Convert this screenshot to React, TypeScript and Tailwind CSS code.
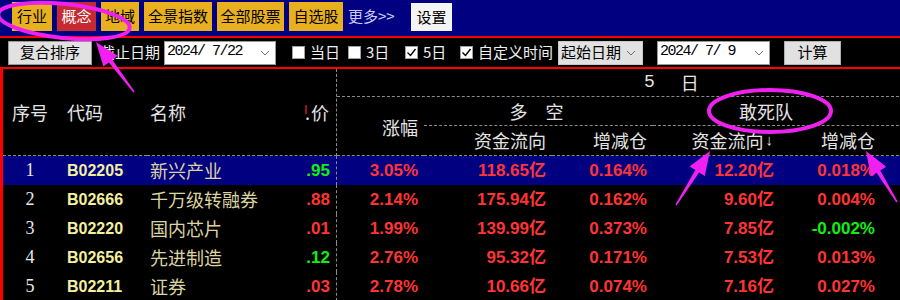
import React from "react";

type Row = {
  no: number;
  code: string;
  name: string;
  price: string;
  priceUp: boolean;
  chg: string;
  flow1: string;
  pos1: string;
  flow2: string;
  pos2: string;
  pos2Up: boolean;
};

const rows: Row[] = [
  { no: 1, code: "B02205", name: "新兴产业", price: ".95", priceUp: false, chg: "3.05%", flow1: "118.65亿", pos1: "0.164%", flow2: "12.20亿", pos2: "0.018%", pos2Up: true },
  { no: 2, code: "B02666", name: "千万级转融券", price: ".88", priceUp: true, chg: "2.14%", flow1: "175.94亿", pos1: "0.162%", flow2: "9.60亿", pos2: "0.004%", pos2Up: true },
  { no: 3, code: "B02220", name: "国内芯片", price: ".01", priceUp: true, chg: "1.99%", flow1: "139.99亿", pos1: "0.373%", flow2: "7.85亿", pos2: "-0.002%", pos2Up: false },
  { no: 4, code: "B02656", name: "先进制造", price: ".12", priceUp: false, chg: "2.76%", flow1: "95.32亿", pos1: "0.171%", flow2: "7.53亿", pos2: "0.013%", pos2Up: true },
  { no: 5, code: "B02211", name: "证券", price: ".03", priceUp: true, chg: "2.78%", flow1: "10.66亿", pos1: "0.074%", flow2: "7.16亿", pos2: "0.027%", pos2Up: true },
];

const tabs = [
  { label: "行业", w: "w-[40px]", active: false },
  { label: "概念", w: "w-[39px]", active: true },
  { label: "地域", w: "w-[38px]", active: false },
  { label: "全景指数", w: "w-[68px]", active: false },
  { label: "全部股票", w: "w-[67px]", active: false },
  { label: "自选股", w: "w-[54px]", active: false },
];

const COLS = "grid grid-cols-[58px_86px_113px_77px_87px_128px_101px_127px_119px]";
const RED = "text-[#ff3434]";
const GREEN = "text-[#10f010]";
const NUM = "font-['Liberation_Sans','Noto_Sans_CJK_SC',sans-serif] font-bold text-[17px]";

function Chevron() {
  return (
    <svg width="10" height="6" viewBox="0 0 10 6" className="shrink-0">
      <polyline points="1,1 5,5 9,1" fill="none" stroke="#707070" strokeWidth="1" />
    </svg>
  );
}

function Check({ checked, label, w }: { checked: boolean; label: string; w: string }) {
  return (
    <div className={`${w} flex items-center gap-[5px] shrink-0`}>
      <div className="w-[13px] h-[13px] bg-white border border-[#a0a0a0] flex items-center justify-center">
        {checked && (
          <svg width="11" height="11" viewBox="0 0 11 11">
            <polyline points="1.5,5.5 4.5,8.5 9.5,2" fill="none" stroke="#000" strokeWidth="1.4" />
          </svg>
        )}
      </div>
      <span className="text-[15px] text-[#f0f0f0]">{label}</span>
    </div>
  );
}

function arrow(tx: number, ty: number, hx: number, hy: number, headLen = 24, headW = 9, neckW = 2.2, tailW = 0.7) {
  const dx = hx - tx;
  const dy = hy - ty;
  const L = Math.hypot(dx, dy);
  const ux = dx / L;
  const uy = dy / L;
  const px = -uy;
  const py = ux;
  const bx = hx - ux * headLen;
  const by = hy - uy * headLen;
  const pts = [
    [tx + px * tailW, ty + py * tailW],
    [bx + px * neckW, by + py * neckW],
    [bx + px * headW, by + py * headW],
    [hx, hy],
    [bx - px * headW, by - py * headW],
    [bx - px * neckW, by - py * neckW],
    [tx - px * tailW, ty - py * tailW],
  ];
  return pts.map((p) => `${p[0].toFixed(1)},${p[1].toFixed(1)}`).join(" ");
}

export default function App() {
  return (
    <div className="relative w-[900px] h-[300px] overflow-hidden bg-black font-['Noto_Sans_CJK_SC',sans-serif]">
      {/* top tabs */}
      <div className="h-[36px] bg-[#000080] flex items-start pt-[2px] pl-[12px] gap-[5px]">
        {tabs.map((t) => (
          <div
            key={t.label}
            className={`${t.w} h-[29px] flex items-center justify-center text-[15px] ${
              t.active ? "bg-[#c42a30] text-white" : "bg-[#e8b01e] text-black"
            }`}
          >
            {t.label}
          </div>
        ))}
        <div className="h-[29px] flex items-center text-[15px] text-[#c8ccff] w-[58px]">更多&gt;&gt;</div>
        <div className="w-[41px] h-[28px] mt-px bg-[#f4f4f4] flex items-center justify-center text-[15px] text-black">设置</div>
      </div>
      <div className="h-[2px] bg-[#ff0000]" />

      {/* toolbar */}
      <div className="h-[29px] flex items-center">
        <div className="ml-[8px] w-[84px] h-[24px] bg-[#e1e1e1] border border-[#9a9a9a] flex items-center justify-center text-[15px] text-black shrink-0">
          复合排序
        </div>
        <div className="ml-[8px] w-[64px] text-[15px] text-[#f0f0f0] shrink-0">截止日期</div>
        <div className="w-[112px] h-[24px] bg-white border border-[#9a9a9a] flex items-center justify-between pl-[2px] pr-[5px] shrink-0">
          <span className="font-['Liberation_Mono',monospace] text-[15px] tracking-[-1.5px] text-black">2024/ 7/22</span>
          <Chevron />
        </div>
        <div className="w-[16px] shrink-0" />
        <Check checked={false} label="当日" w="w-[56px]" />
        <Check checked={false} label="3日" w="w-[57px]" />
        <Check checked={true} label="5日" w="w-[55px]" />
        <Check checked={true} label="自定义时间" w="w-[98px]" />
        <div className="w-[85px] h-[24px] bg-[#e1e1e1] border border-[#c8c8c8] flex items-center justify-between pl-[2px] pr-[6px] shrink-0">
          <span className="text-[15px] text-black">起始日期</span>
          <Chevron />
        </div>
        <div className="ml-[14px] w-[113px] h-[24px] bg-white border border-[#9a9a9a] flex items-center justify-between pl-[2px] pr-[5px] shrink-0">
          <span className="font-['Liberation_Mono',monospace] text-[15px] tracking-[-1.5px] text-black">2024/ 7/ 9</span>
          <Chevron />
        </div>
        <div className="ml-[14px] w-[57px] h-[24px] bg-[#e1e1e1] border border-[#b0b0b0] flex items-center justify-center text-[15px] text-black shrink-0">
          计算
        </div>
      </div>

      {/* table */}
      <div className="border-t-2 border-l-[3px] border-[#ff0000]">
        <div className={`${COLS} grid-rows-[28px_29px_30px] text-[18px] text-[#e4e4e4]`}>
          <div className="col-start-1 row-start-1 row-span-3 border-b border-dashed border-[#8a8a8a] flex items-center justify-center pr-[4px]">序号</div>
          <div className="col-start-2 row-start-1 row-span-3 border-b border-dashed border-[#8a8a8a] flex items-center pl-[6px]">代码</div>
          <div className="col-start-3 row-start-1 row-span-3 border-b border-dashed border-[#8a8a8a] flex items-center pl-[3px]">名称</div>
          <div className="col-start-4 row-start-1 row-span-3 border-b border-r border-dashed border-[#8a8a8a] flex items-center justify-end pr-[7px]">
            <span className="inline-block w-[2px] h-[9px] bg-[#a01010] mb-[6px]" />
            <span className="-ml-[2px] mr-px">.</span>价
          </div>
          <div className="col-start-5 col-span-5 row-start-1 border-b border-dashed border-[#8a8a8a] flex items-center pl-[307px] gap-[26px]">
            <span className="font-['Liberation_Mono',monospace] text-[18px]">5</span>
            <span>日</span>
          </div>
          <div className="col-start-5 row-start-2 row-span-2 border-b border-dashed border-[#8a8a8a] flex items-center justify-end pr-[6px] pt-[2px]">涨幅</div>
          <div className="col-start-6 col-span-2 row-start-2 border-b border-dashed border-[#8a8a8a] flex items-center justify-center gap-[18px] pr-[4px]">
            <span>多</span>
            <span>空</span>
          </div>
          <div className="col-start-8 col-span-2 row-start-2 border-b border-dashed border-[#8a8a8a] flex items-center justify-center pr-[20px]">敢死队</div>
          <div className="col-start-6 row-start-3 border-b border-dashed border-[#8a8a8a] flex items-center justify-end pr-[6px]">资金流向</div>
          <div className="col-start-7 row-start-3 border-b border-dashed border-[#8a8a8a] flex items-center justify-end pr-[6px]">增减仓</div>
          <div className="col-start-8 row-start-3 border-b border-dashed border-[#8a8a8a] flex items-center justify-end pr-[7px]">
            资金流向<span className="font-['Liberation_Sans',sans-serif] text-[15px] ml-[2px]">↓</span>
          </div>
          <div className="col-start-9 row-start-3 border-b border-dashed border-[#8a8a8a] flex items-center justify-end pr-[24px]">增减仓</div>
        </div>

        {rows.map((r) => (
          <div key={r.no} className={`${COLS} h-[29px] ${r.no === 1 ? "bg-[#000080]" : ""}`}>
            <div className="flex items-center justify-center pr-[4px] font-['Liberation_Serif',serif] text-[18px] text-[#e8e8e8]">{r.no}</div>
            <div className="flex items-center pl-[6px] font-['Liberation_Sans',sans-serif] font-bold text-[16px] text-[#f4f0a0]">{r.code}</div>
            <div className="flex items-center pl-[3px] text-[18px] text-[#dcd4a0]">{r.name}</div>
            <div className={`flex items-center justify-end pr-[6px] border-r border-dashed border-[#8a8a8a] ${NUM} ${r.priceUp ? RED : GREEN}`}>{r.price}</div>
            <div className={`flex items-center justify-end pr-[6px] ${NUM} ${RED}`}>{r.chg}</div>
            <div className={`flex items-center justify-end pr-[6px] ${NUM} ${RED}`}>{r.flow1}</div>
            <div className={`flex items-center justify-end pr-[6px] ${NUM} ${RED}`}>{r.pos1}</div>
            <div className={`flex items-center justify-end pr-[6px] ${NUM} ${RED}`}>{r.flow2}</div>
            <div className={`flex items-center justify-end pr-[24px] ${NUM} ${r.pos2Up ? RED : GREEN}`}>{r.pos2}</div>
          </div>
        ))}
      </div>

      {/* annotation marks drawn over the screenshot */}
      <svg className="absolute top-0 left-0 pointer-events-none" width="900" height="300" viewBox="0 0 900 300">
        <ellipse cx="64" cy="21" rx="66" ry="17" fill="none" stroke="#f020f0" strokeWidth="4" transform="rotate(6 64 21)" />
        <polygon points={arrow(134, 92, 96, 42)} fill="#f020f0" />
        <ellipse cx="770" cy="111" rx="61" ry="21" fill="none" stroke="#f020f0" strokeWidth="4" />
        <polygon points={arrow(676, 205, 710, 151)} fill="#f020f0" />
        <polygon points={arrow(897, 202, 866, 151)} fill="#f020f0" />
      </svg>
    </div>
  );
}
